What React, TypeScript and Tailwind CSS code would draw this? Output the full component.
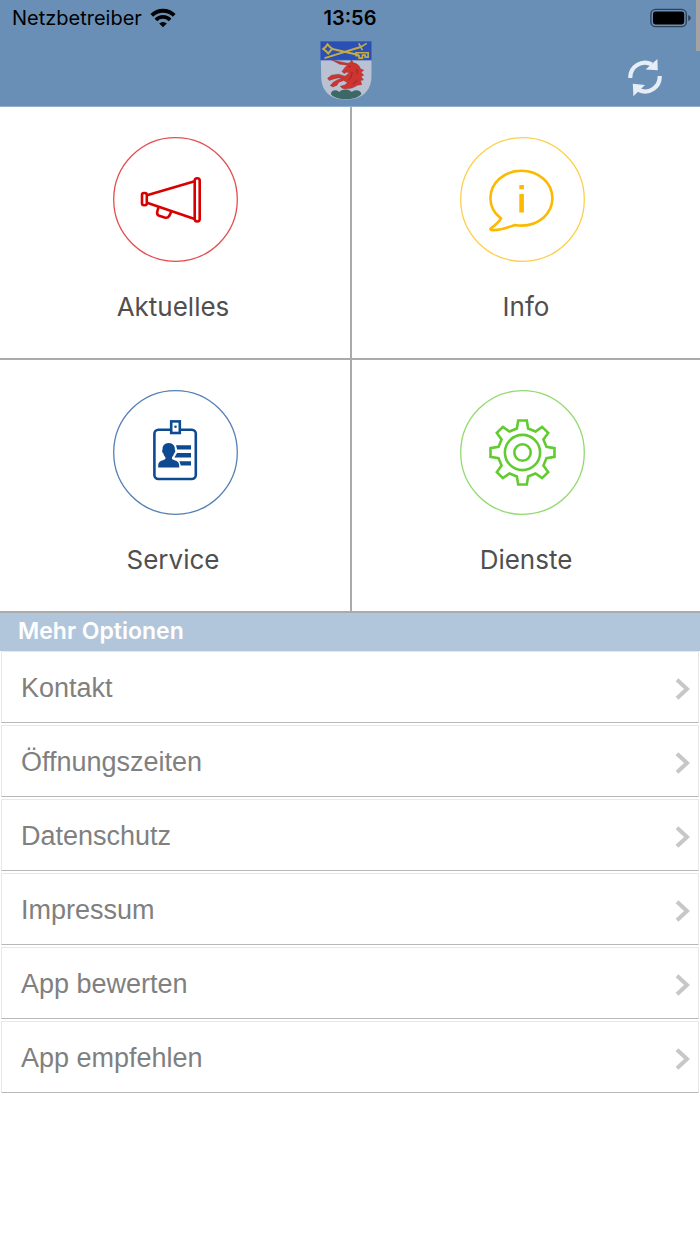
import type { ReactNode } from "react";
import clsx from "clsx";

const gearPoints = Array.from({ length: 8 }, (_, i) => {
  const angle = (i * Math.PI) / 4;
  const tooth = [
    [-5.6, -24],
    [-4.3, -32],
    [4.3, -32],
    [5.6, -24],
  ];
  return tooth
    .map(([x, y]) => {
      const px = 62.5 + x * Math.cos(angle) - y * Math.sin(angle);
      const py = 62.5 + x * Math.sin(angle) + y * Math.cos(angle);
      return `${px.toFixed(2)},${py.toFixed(2)}`;
    })
    .join(" ");
}).join(" ");

const Circle = ({ color, children }: { color: string; children: ReactNode }) => (
  <svg
    viewBox="0 0 125 125"
    className="size-[125px]"
    fill="none"
    stroke={color}
    strokeWidth="2.6"
    aria-hidden="true"
  >
    <circle cx="62.5" cy="62.5" r="61.8" strokeWidth="1.3" strokeOpacity="0.7" />
    {children}
  </svg>
);

const MegaphoneIcon = () => (
  <Circle color="#d90000">
    <rect x="29" y="56" width="4.8" height="12.2" rx="2" />
    <rect x="81.7" y="41.3" width="5" height="43.2" rx="2.4" />
    <path d="M34 58.2 81.7 44.2M34 65.8 81.7 82" />
    <path d="M45.4 70.4 44.2 75Q43.6 77.8 46.2 78.8L51.6 80.6Q54.6 81.4 56.2 79L58.4 74.4" />
  </Circle>
);

const InfoIcon = () => (
  <Circle color="#fbba00">
    <path d="M40.9 81.4C34.2 76.3 30.4 69.4 30.4 61.3C30.4 46 44 33.8 61.4 33.8S92.4 46 92.4 61.3S78.8 88.6 61.4 88.6Q58 88.6 54.6 88C48 90.4 40 94 31.4 93Q29.6 92.4 31 91.2C35.4 88.2 38.6 85.6 40.9 81.4Z" />
    <path d="M59.3 48h4.6v4.2h-4.6zM59.3 57h4.6v18.4h-4.6z" fill="#fbba00" stroke="none" />
  </Circle>
);

const BadgeIcon = () => (
  <Circle color="#0e4a8f">
    <rect x="41.4" y="39.8" width="41.4" height="49.2" rx="4" />
    <rect x="58.2" y="31.4" width="8.6" height="11.6" fill="#fff" />
    <circle cx="62.5" cy="36.8" r="1.3" fill="#0e4a8f" stroke="none" />
    <g fill="#0e4a8f" stroke="none">
      <path d="M55.7 53C60 53 62.2 56 61.8 59.6C62.8 60 62.2 63 61 63.6C60.6 65.4 59.8 66.4 59 67.2V69C61 70.6 65.8 70.4 66.2 75V77.6H45.2V75C45.6 70.4 50.4 70.6 52.4 69V67.2C51.6 66.4 50.8 65.4 50.4 63.6C49.2 63 48.6 60 49.6 59.6C49.2 56 51.4 53 55.7 53Z" />
      <path d="M63 55.2H78V59.6H64.2ZM64 63.1H78V67.4H61.4ZM66.4 71.2H78V75.4H67.8Z" />
    </g>
  </Circle>
);

const GearIcon = () => (
  <Circle color="#62cb31">
    <polygon points={gearPoints} />
    <circle cx="62.5" cy="62.5" r="17.6" />
    <circle cx="62.5" cy="62.5" r="8.2" />
  </Circle>
);

const WifiIcon = () => (
  <svg viewBox="0 0 26 20" className="h-5 w-[26px]" fill="none" stroke="#000" aria-hidden="true">
    <path d="M1.8 7.4A15.8 15.8 0 0 1 24.2 7.4" strokeWidth="3.8" />
    <path d="M5.9 11.9A9.9 9.9 0 0 1 20.1 11.9" strokeWidth="3.6" />
    <path d="M13 19.2 9.2 15.6A5.4 5.4 0 0 1 16.8 15.6Z" fill="#000" stroke="none" />
  </svg>
);

const BatteryIcon = () => (
  <svg viewBox="0 0 42 20" className="h-5 w-[42px]" aria-hidden="true">
    <rect x="0.9" y="1.4" width="35.4" height="17.2" rx="4.6" fill="none" stroke="#304459" strokeWidth="1.4" />
    <rect x="3" y="3.6" width="31.2" height="12.8" rx="2.4" />
    <path d="M38.2 7Q40.8 8 40.8 10T38.2 13Z" fill="#304459" />
  </svg>
);

const RefreshIcon = () => (
  <svg viewBox="0 0 36 40" className="h-10 w-9" fill="#e6edf5" aria-hidden="true">
    <path d="M2.3 20A14.7 14.7 0 0 1 23.8 6.4M31.7 18A14.7 14.7 0 0 1 10.8 32" fill="none" stroke="#e6edf5" strokeWidth="4.2" />
    <path d="M29.4 1 29.8 12.2 17.6 11.6ZM4.8 25.8 17 27 5.4 38.2Z" />
  </svg>
);

const Crest = () => (
  <svg viewBox="17 15 154 176" className="h-[59px] w-[52px]" role="img" aria-label="Wappen">
    <path d="M18 16H170V120C170 165 140 190 94 190S20 165 20 120Z" fill="#b9c1d2" />
    <path d="M18 16H170V72H18Z" fill="#2a4fb5" stroke="#4164b8" strokeWidth="2" />
    <g fill="none" stroke="#c3ac48">
      <path d="M50 38 132 57" strokeWidth="6" />
      <path d="M30 66 140 32" strokeWidth="6" />
      <path d="M132 22 143 42M138 33 156 22" strokeWidth="5" />
      <path d="M39 25 46 33 53 38 47 45 41 52 34 45 26 39 33 33Z" strokeWidth="6" />
      <path d="M124 50H160V63H151V57H143V66H133V59H124Z" strokeWidth="5" />
    </g>
    <path
      d="M52 72 98 81 107 79 110 71 116 80C128 82 135 89 137 98L147 102 139 108 147 117 139 121 146 131 137 133 141 145 128 147C113 157 97 160 83 156L77 150 91 146 98 139 87 133 73 138 67 147 55 152 47 148 56 138 68 131 83 126 70 125 55 129 44 133 39 126 51 117 72 114 91 120 104 110 96 108 88 112 82 106 91 94 98 87 75 84Z"
      fill="#cf352e"
      stroke="#7d3039"
      strokeWidth="1.2"
    />
    <path d="M102 91 108 92M112 108C113 120 106 127 101 131M126 98 128 112M114 144 128 132" fill="none" stroke="#6b2c34" strokeWidth="2.4" />
    <path d="M49 174C49 162 64 158 74 167C79 157 105 157 111 167C122 158 139 162 140 173C124 194 65 194 49 174Z" fill="#3c6965" />
  </svg>
);

const tiles = [
  { label: "Aktuelles", icon: <MegaphoneIcon /> },
  { label: "Info", icon: <InfoIcon /> },
  { label: "Service", icon: <BadgeIcon /> },
  { label: "Dienste", icon: <GearIcon /> },
];

const options = [
  "Kontakt",
  "Öffnungszeiten",
  "Datenschutz",
  "Impressum",
  "App bewerten",
  "App empfehlen",
];

const Header = () => (
  <header className="relative border-b border-[#8fafcd] bg-[#698fb7] text-black">
    <div className="grid h-9 grid-cols-3 items-center pr-2 pl-3 text-xl">
      <div className="flex items-center gap-2">
        <span>Netzbetreiber</span>
        <WifiIcon />
      </div>
      <time className="pr-1 text-center font-semibold">13:56</time>
      <div className="flex justify-end">
        <BatteryIcon />
      </div>
    </div>
    <div className="grid grid-cols-3 items-end px-9 pt-[5px] pb-[6px]">
      <div className="col-start-2 flex justify-center pr-2">
        <Crest />
      </div>
      <button type="button" aria-label="Aktualisieren" className="mb-[2px] justify-self-end">
        <RefreshIcon />
      </button>
    </div>
    {/* Scroll indicator */}
    <div className="absolute top-0 right-0 h-[51px] w-1 bg-[#a3a3a3]"></div>
  </header>
);

export default function App() {
  return (
    <div className="min-h-screen bg-white font-[Inter,sans-serif]">
      <Header />

      <nav className="grid grid-cols-2">
        {tiles.map(({ label, icon }, i) => (
          <a
            key={label}
            href="#"
            className={clsx(
              "flex flex-col items-center gap-[26px] border-b-2 border-[#aaaaaa] pt-[30px] pb-8",
              i % 2 === 0 ? "-mr-[2px] border-r-2" : "ml-[2px]",
            )}
          >
            <span className={clsx(i % 2 === 1 && "pr-2")}>{icon}</span>
            <span className={clsx("text-[26px] leading-[38px] text-[#4f4f4f]", i % 2 === 0 && "pr-1")}>
              {label}
            </span>
          </a>
        ))}
      </nav>

      <section>
        <h2 className="bg-[#b2c6db] px-[18px] pb-[2px] text-[23px] leading-9 font-semibold text-white">
          Mehr Optionen
        </h2>
        <ul className="flex flex-col gap-[2px] px-px font-['Liberation_Sans',sans-serif]">
          {options.map((option) => (
            <li key={option}>
              <a
                href="#"
                className="flex h-[72px] items-center justify-between border border-[#e8e8e8] border-b-[#b8b8b8] pt-[3px] pr-2 pl-[19px] text-[27px] text-[#808080]"
              >
                {option}
                <svg viewBox="0 0 16 22" className="h-[22px] w-4" fill="none" stroke="#c7c7c7" strokeWidth="4" aria-hidden="true">
                  <path d="M3 1.8 13 11 3 20.2" />
                </svg>
              </a>
            </li>
          ))}
        </ul>
      </section>
    </div>
  );
}
